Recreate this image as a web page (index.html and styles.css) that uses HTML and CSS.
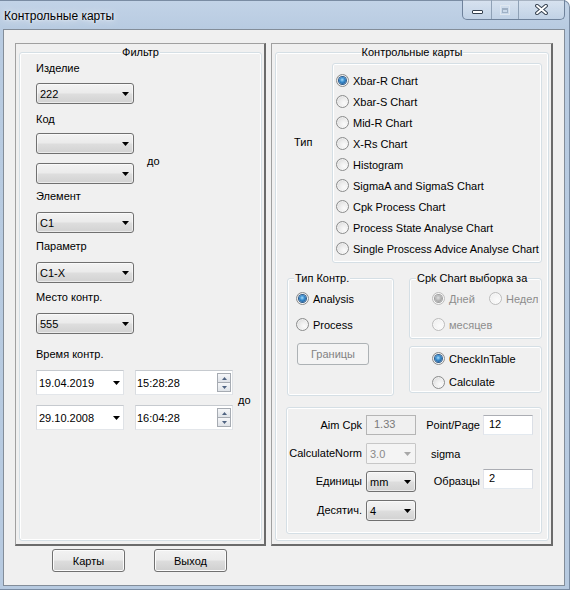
FILE: index.html
```html
<!DOCTYPE html>
<html lang="ru">
<head>
<meta charset="utf-8">
<title>Контрольные карты</title>
<link rel="stylesheet" href="styles.css">
</head>
<body>
<div class="window">
  <div class="titlebar">
    <div class="title">Контрольные карты</div>
    <div class="caption">
      <div class="cb cb-min"><span class="g-min"></span></div>
      <div class="cb cb-max"><span class="g-max"><span class="g-max-in"></span></span></div>
      <div class="cb cb-close">
        <svg class="g-close" width="13" height="11" viewBox="0 0 13 11"><path d="M2 1.8L11 9.2M11 1.8L2 9.2" stroke="#34404f" stroke-width="3.8" stroke-linecap="round" fill="none"/><path d="M2 1.8L11 9.2M11 1.8L2 9.2" stroke="#fff" stroke-width="1.9" stroke-linecap="round" fill="none"/></svg>
      </div>
    </div>
  </div>
  <div class="client">
    <div class="panels">
      <div class="panel">
        <div class="group main-group">
          <div class="legend center">Фильтр</div>
          <div class="fbody">
            <div class="lbl mt3">Изделие</div>
            <div class="combo mt8"><span class="val">222</span><svg class="arr" width="7" height="4" viewBox="0 0 7 4"><path d="M0 0H7L3.5 4Z"/></svg></div>
            <div class="lbl mt9">Код</div>
            <div class="code-row mt7">
              <div class="combo-stack">
                <div class="combo"><span class="val"></span><svg class="arr" width="7" height="4" viewBox="0 0 7 4"><path d="M0 0H7L3.5 4Z"/></svg></div>
                <div class="combo"><span class="val"></span><svg class="arr" width="7" height="4" viewBox="0 0 7 4"><path d="M0 0H7L3.5 4Z"/></svg></div>
              </div>
              <div class="lbl to-code">до</div>
            </div>
            <div class="lbl mt6">Элемент</div>
            <div class="combo mt9"><span class="val">C1</span><svg class="arr" width="7" height="4" viewBox="0 0 7 4"><path d="M0 0H7L3.5 4Z"/></svg></div>
            <div class="lbl mt7">Параметр</div>
            <div class="combo mt9"><span class="val">C1-X</span><svg class="arr" width="7" height="4" viewBox="0 0 7 4"><path d="M0 0H7L3.5 4Z"/></svg></div>
            <div class="lbl mt8">Место контр.</div>
            <div class="combo mt9"><span class="val">555</span><svg class="arr" width="7" height="4" viewBox="0 0 7 4"><path d="M0 0H7L3.5 4Z"/></svg></div>
            <div class="lbl mt14">Время контр.</div>
            <div class="dt-block mt9">
              <div class="dt-rows">
                <div class="dt-row">
                  <div class="dtp"><span class="val">19.04.2019</span><svg class="arr" width="7" height="4" viewBox="0 0 7 4"><path d="M0 0H7L3.5 4Z"/></svg></div>
                  <div class="tmp"><span class="val">15:28:28</span>
                    <div class="spin"><span class="sp sp-up"><svg width="5" height="3" viewBox="0 0 5 3"><path d="M0 3H5L2.5 0Z"/></svg></span><span class="sp sp-dn"><svg width="5" height="3" viewBox="0 0 5 3"><path d="M0 0H5L2.5 3Z"/></svg></span></div>
                  </div>
                </div>
                <div class="dt-row">
                  <div class="dtp"><span class="val">29.10.2008</span><svg class="arr" width="7" height="4" viewBox="0 0 7 4"><path d="M0 0H7L3.5 4Z"/></svg></div>
                  <div class="tmp"><span class="val">16:04:28</span>
                    <div class="spin"><span class="sp sp-up"><svg width="5" height="3" viewBox="0 0 5 3"><path d="M0 3H5L2.5 0Z"/></svg></span><span class="sp sp-dn"><svg width="5" height="3" viewBox="0 0 5 3"><path d="M0 0H5L2.5 3Z"/></svg></span></div>
                  </div>
                </div>
              </div>
              <div class="lbl to-dt">до</div>
            </div>
          </div>
        </div>
      </div>

      <div class="panel panel-right">
        <div class="group main-group">
          <div class="legend center">Контрольные карты</div>
          <div class="cbody">
            <div class="type-row">
              <div class="lbl type-lbl">Тип</div>
              <div class="box type-box">
                <div class="radio"><span class="rb on"></span>Xbar-R Chart</div>
                <div class="radio"><span class="rb"></span>Xbar-S Chart</div>
                <div class="radio"><span class="rb"></span>Mid-R Chart</div>
                <div class="radio"><span class="rb"></span>X-Rs Chart</div>
                <div class="radio"><span class="rb"></span>Histogram</div>
                <div class="radio"><span class="rb"></span>SigmaA and SigmaS Chart</div>
                <div class="radio"><span class="rb"></span>Cpk Process Chart</div>
                <div class="radio"><span class="rb"></span>Process State Analyse Chart</div>
                <div class="radio"><span class="rb"></span>Single Proscess Advice Analyse Chart</div>
              </div>
            </div>

            <div class="mid-row">
              <div class="group kontr">
                <div class="legend side">Тип Контр.</div>
                <div class="radio kr mt3"><span class="rb on"></span>Analysis</div>
                <div class="radio kr mt5"><span class="rb"></span>Process</div>
                <div class="btn btn-dis">Границы</div>
              </div>
              <div class="mid-col">
                <div class="group cpk">
                  <div class="legend side">Cpk Chart выборка за</div>
                  <div class="cpk-row mt3">
                    <div class="radio dis day"><span class="rb on"></span>Дней</div>
                    <div class="radio dis week"><span class="rb"></span>Недел</div>
                  </div>
                  <div class="cpk-row mt5">
                    <div class="radio dis"><span class="rb"></span>месяцев</div>
                  </div>
                </div>
                <div class="group calc">
                  <div class="radio cr mt2"><span class="rb on"></span>CheckInTable</div>
                  <div class="radio cr mt4"><span class="rb"></span>Calculate</div>
                </div>
              </div>
            </div>

            <div class="group params">
              <div class="frow row-a">
                <div class="flbl">Aim Cpk</div>
                <div class="tb tb-dis">1.33</div>
                <div class="flbl2">Point/Page</div>
                <div class="tb">12</div>
              </div>
              <div class="frow row-b">
                <div class="flbl">CalculateNorm</div>
                <div class="combo combo-dis small"><span class="val">3.0</span><svg class="arr" width="7" height="4" viewBox="0 0 7 4"><path d="M0 0H7L3.5 4Z"/></svg></div>
                <div class="sigma">sigma</div>
              </div>
              <div class="frow row-c">
                <div class="flbl">Единицы</div>
                <div class="combo small"><span class="val">mm</span><svg class="arr" width="7" height="4" viewBox="0 0 7 4"><path d="M0 0H7L3.5 4Z"/></svg></div>
                <div class="flbl2">Образцы</div>
                <div class="tb">2</div>
              </div>
              <div class="frow row-d">
                <div class="flbl">Десятич.</div>
                <div class="combo small"><span class="val">4</span><svg class="arr" width="7" height="4" viewBox="0 0 7 4"><path d="M0 0H7L3.5 4Z"/></svg></div>
              </div>
            </div>
          </div>
        </div>
      </div>
    </div>

    <div class="actions">
      <div class="btn">Карты</div>
      <div class="btn">Выход</div>
    </div>
  </div>
</div>
</body>
</html>
```

FILE: styles.css
```css
* { box-sizing: border-box; }
html, body { margin: 0; padding: 0; }
body {
  background: #ffffff;
  font-family: "Liberation Sans", Arial, sans-serif;
  font-size: 11px;
  color: #000;
}

/* window frame */
.window {
  width: 570px;
  height: 590px;
  background: linear-gradient(#c2d3e7 0, #b8cbe1 28px, #b7cae0 100%);
  border: 1px solid #7a8ca3;
  border-left: none;
  border-radius: 0 7px 0 0;
  display: flex;
  flex-direction: column;
}
.titlebar {
  height: 28px;
  display: flex;
  justify-content: space-between;
  align-items: flex-start;
  flex: none;
}
.title {
  padding: 8px 0 0 4px;
  font-size: 12px;
  line-height: 14px;
  color: #000;
  text-shadow: 0 0 8px rgba(255,255,255,0.95), 0 0 3px rgba(255,255,255,0.8);
}
.caption {
  display: flex;
  height: 20px;
  margin: -1px 4px 0 0;
  border: 1px solid #6f829b;
  border-top: none;
  border-radius: 0 0 5px 5px;
  overflow: hidden;
  background: linear-gradient(rgba(255,255,255,0.35), rgba(255,255,255,0.08));
}
.cb { display: flex; justify-content: center; height: 100%; }
.cb + .cb { border-left: 1px solid #8fa1b6; }
.cb-min { width: 28px; }
.cb-max { width: 27px; }
.cb-close { width: 46px; }
.g-min {
  width: 11px; height: 4px;
  margin-top: 10px;
  background: #fff;
  border: 1px solid #34404f;
  border-radius: 1px;
}
.g-max {
  width: 10px; height: 10px;
  margin-top: 5px;
  border: 1px solid #dfe7f0;
  display: flex; align-items: center; justify-content: center;
}
.g-max-in {
  width: 6px; height: 5px;
  border: 1px solid #9fb0c4;
  border-top-width: 2px;
}
.g-close { margin-top: 4px; }

/* client area */
.client {
  margin-left: 3px;
  width: 562px;
  height: 557px;
  border: 1px solid #838d99;
  background: #f0f0f0;
  display: flex;
  flex-direction: column;
  flex: none;
}
.panels {
  display: flex;
  gap: 5px;
  padding: 13px 0 0 11px;
}
.panel {
  width: 251px;
  height: 503px;
  border-style: solid;
  border-width: 1px 2px 2px 1px;
  border-color: #a0a0a0 #6b6b6b #6b6b6b #a0a0a0;
  padding: 8px 2px 0 3px;
  display: flex;
  flex-direction: column;
}
.panel-right { width: 282px; }

.group {
  border: 1px solid #d5dfe5;
  border-radius: 3px;
  box-shadow: inset 0 0 0 1px #ffffff;
  display: flex;
  flex-direction: column;
  flex: none;
}
.box {
  border: 1px solid #d5dfe5;
  border-radius: 3px;
  box-shadow: inset 0 0 0 1px #ffffff;
}
.main-group { height: 489px; }
.legend {
  height: 13px;
  line-height: 13px;
  margin-top: -7px;
  padding: 0 1px;
  background: #f0f0f0;
  white-space: nowrap;
  align-self: flex-start;
}
.legend.center { align-self: center; }
.legend.side { margin-left: 6px; }

.lbl { height: 13px; line-height: 13px; white-space: nowrap; }
.mt2 { margin-top: 2px; }
.mt3 { margin-top: 3px; }
.mt4 { margin-top: 4px; }
.mt5 { margin-top: 5px; }
.mt6 { margin-top: 6px; }
.mt7 { margin-top: 7px; }
.mt8 { margin-top: 8px; }
.mt9 { margin-top: 9px; }
.mt14 { margin-top: 14px; }

/* filter */
.fbody { display: flex; flex-direction: column; align-items: flex-start; padding-left: 16px; }
.combo {
  width: 98px;
  height: 21px;
  border: 1px solid #707070;
  border-radius: 3px;
  background: linear-gradient(#f3f3f3 0, #ebebeb 45%, #dddddd 55%, #d2d2d2 100%);
  box-shadow: inset 0 0 0 1px rgba(255,255,255,0.55);
  display: flex;
  align-items: center;
  padding-left: 3px;
  flex: none;
}
.combo .val { flex: 1; white-space: nowrap; }
.arr { flex: none; margin-right: 4px; fill: #000; }
.combo.small { width: 50px; }
.combo-dis {
  border-color: #c7c7c7;
  border-radius: 1px;
  background: #f4f4f4;
  box-shadow: none;
  color: #8a8a8a;
}
.combo-dis .arr { fill: #a8a8a8; }

.code-row { display: flex; align-items: flex-start; }
.combo-stack { display: flex; flex-direction: column; gap: 9px; }
.to-code { margin: 22px 0 0 13px; }

.dt-block { display: flex; align-items: center; }
.dt-rows { display: flex; flex-direction: column; gap: 10px; }
.dt-row { display: flex; gap: 11px; }
.to-dt { margin-left: 5px; }
.dtp, .tmp {
  height: 25px;
  background: #fff;
  border: 1px solid;
  border-color: #c6cacf #dfe2e6 #e3e6ea #d9dce0;
  display: flex;
  align-items: center;
}
.dtp { width: 88px; padding-left: 2px; }
.dtp .val, .tmp .val { flex: 1; white-space: nowrap; }
.dtp .arr { margin-right: 3px; }
.tmp { width: 98px; padding-left: 1px; }
.spin { display: flex; flex-direction: column; margin-right: 1px; }
.sp {
  width: 14px;
  height: 10px;
  border: 1px solid #a6abb2;
  background: linear-gradient(#f6f7f9, #dfe3e8);
  display: flex; align-items: center; justify-content: center;
  fill: #4f6381;
}
.sp-dn { margin-top: -1px; }

/* charts */
.cbody { display: flex; flex-direction: column; }
.type-row { display: flex; margin-top: 4px; padding-left: 18px; }
.type-lbl { width: 38px; margin-top: 73px; }
.type-box { width: 210px; height: 200px; padding: 6px 0 0 3px; }

.radio {
  display: flex;
  align-items: center;
  gap: 4px;
  height: 21px;
  white-space: nowrap;
}
.rb {
  width: 13px; height: 13px;
  border-radius: 50%;
  border: 1px solid #8b8c8c;
  background: radial-gradient(circle at 65% 65%, #fbfbfb 0, #ececec 45%, #cfcfcf 100%);
  box-shadow: inset 0 0 0 1px rgba(255,255,255,0.5);
  display: flex; align-items: center; justify-content: center;
  flex: none;
}
.rb.on::after {
  content: "";
  width: 7px; height: 7px;
  border-radius: 50%;
  background: radial-gradient(circle at 45% 40%, #a6dcfb 0, #3a8fd1 40%, #0d3f7a 100%);
  box-shadow: 0 0 0 1px #2c5b8c;
}
.radio.dis { color: #8d8d8d; }
.radio.dis .rb {
  border-color: #bcbcbc;
  background: radial-gradient(circle at 65% 65%, #fbfbfb 0, #f2f2f2 60%, #e4e4e4 100%);
}
.radio.dis .rb.on::after {
  background: radial-gradient(circle at 45% 40%, #e0e0e0 0, #aaaaaa 60%, #8e8e8e 100%);
  box-shadow: 0 0 0 1px #a0a0a0;
}

.mid-row { display: flex; gap: 15px; margin: 15px 0 0 11px; }
.kontr { width: 107px; height: 118px; }
.kr { margin-left: 8px; }
.mid-col { width: 133px; display: flex; flex-direction: column; gap: 7px; }
.cpk { height: 61px; }
.cpk-row { display: flex; padding-left: 22px; }
.day { width: 57px; }
.week { width: 49px; overflow: hidden; }
.calc { height: 47px; }
.cr { margin-left: 22px; }

.btn {
  width: 73px;
  height: 23px;
  border: 1px solid #707070;
  border-radius: 3px;
  background: linear-gradient(#f2f2f2 0, #ebebeb 48%, #dddddd 52%, #cfcfcf 100%);
  box-shadow: inset 0 0 0 1px #fbfbfb;
  display: flex; align-items: center; justify-content: center;
  white-space: nowrap;
}
.btn-dis {
  width: 72px;
  height: 22px;
  margin: 8px 0 0 9px;
  border-color: #adb2b5;
  background: #f4f4f4;
  box-shadow: none;
  color: #838383;
}

.params { width: 256px; height: 127px; margin: 11px 0 0 10px; padding-top: 7px; }
.frow { display: grid; grid-template-columns: 79px 50px 67px 50px; }
.row-a { height: 20px; }
.row-b { height: 21px; margin-top: 8px; }
.row-c { height: 23px; margin-top: 5px; }
.row-d { height: 21px; margin-top: 8px; }
.flbl, .flbl2 { text-align: right; white-space: nowrap; align-self: center; line-height: 13px; }
.flbl { padding-right: 4px; }
.flbl2 { padding-right: 3px; }
.row-c .flbl, .row-c .flbl2 { align-self: end; line-height: 21px; }
.row-c .combo { align-self: end; }
.row-c .tb { align-self: start; }
.sigma { grid-column: 3; padding-left: 15px; align-self: center; }
.tb {
  height: 20px;
  background: #fff;
  border: 1px solid;
  border-color: #abadb3 #dbdfe6 #e3e9ef #e2e3ea;
  padding-left: 5px;
  line-height: 17px;
  white-space: nowrap;
}
.tb-dis {
  background: #f0f0f0;
  border-color: #b5b5b5;
  color: #7a7a7a;
  padding-left: 7px;
}

.actions { display: flex; gap: 29px; padding: 3px 0 0 48px; }
```
